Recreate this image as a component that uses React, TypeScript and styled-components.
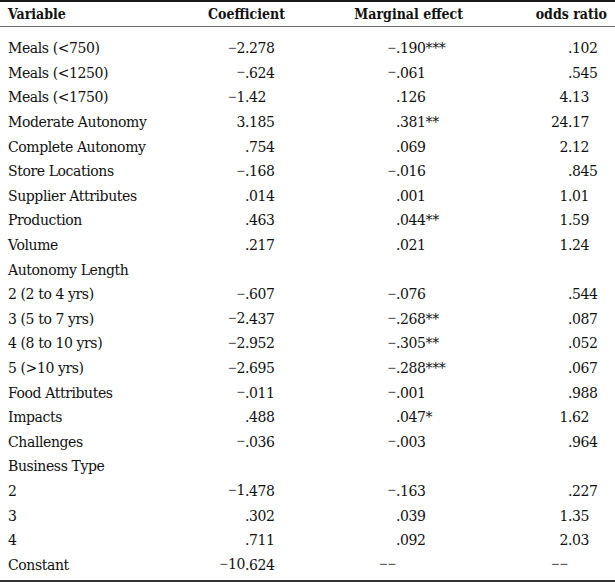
import React from "react";
import styled, { createGlobalStyle } from "styled-components";

const Global = createGlobalStyle`
  html, body { margin: 0; padding: 0; background: #ffffff; }
  body { font-family: "DejaVu Serif", "Liberation Serif", serif; color: #111111; }
`;

const COLS = "185px 60px 40px 111px 67px 105px 39px";

const Table = styled.div`
  width: 615px;
  box-sizing: border-box;
  border-top: 2px solid #1a1a1a;
  border-bottom: 2px solid #333333;
`;

const HeadRow = styled.div`
  display: grid;
  grid-template-columns: ${COLS};
  padding-right: 8px;
  height: 24px;
  align-items: center;
  border-bottom: 1px solid #6a6a6a;
  font-family: "DejaVu Serif Condensed", "DejaVu Serif", serif;
  font-weight: bold;
  font-size: 14px;
`;

const HeadCell = styled.div<{ $span?: number; $right?: boolean }>`
  grid-column: span ${(p) => p.$span ?? 1};
  text-align: ${(p) => (p.$right ? "right" : "left")};
  padding-left: ${(p) => (p.$right ? "0" : "8px")};
  white-space: nowrap;
`;

const Body = styled.div`
  padding: 9px 0 3px;
`;

const Row = styled.div`
  display: grid;
  grid-template-columns: ${COLS};
  padding-right: 8px;
  height: 24.6px;
  align-items: center;
  font-size: 14px;
  letter-spacing: -0.4px;
`;

const Label = styled.div`
  padding-left: 8px;
  white-space: nowrap;
`;

const IntPart = styled.span`
  text-align: right;
  white-space: nowrap;
`;

const FracPart = styled.span`
  text-align: left;
  white-space: nowrap;
`;

const Sign = styled.span`
  font-family: "Liberation Serif", serif;
  font-size: 15px;
  letter-spacing: 0;
`;

type RowData = [string, string?, string?, string?];

const rows: RowData[] = [
  ["Meals (<750)", "−2.278", "−.190***", ".102"],
  ["Meals (<1250)", "−.624", "−.061", ".545"],
  ["Meals (<1750)", "−1.42", ".126", "4.13"],
  ["Moderate Autonomy", "3.185", ".381**", "24.17"],
  ["Complete Autonomy", ".754", ".069", "2.12"],
  ["Store Locations", "−.168", "−.016", ".845"],
  ["Supplier Attributes", ".014", ".001", "1.01"],
  ["Production", ".463", ".044**", "1.59"],
  ["Volume", ".217", ".021", "1.24"],
  ["Autonomy Length"],
  ["2 (2 to 4 yrs)", "−.607", "−.076", ".544"],
  ["3 (5 to 7 yrs)", "−2.437", "−.268**", ".087"],
  ["4 (8 to 10 yrs)", "−2.952", "−.305**", ".052"],
  ["5 (>10 yrs)", "−2.695", "−.288***", ".067"],
  ["Food Attributes", "−.011", "−.001", ".988"],
  ["Impacts", ".488", ".047*", "1.62"],
  ["Challenges", "−.036", "−.003", ".964"],
  ["Business Type"],
  ["2", "−1.478", "−.163", ".227"],
  ["3", ".302", ".039", "1.35"],
  ["4", ".711", ".092", "2.03"],
  ["Constant", "−10.624", "−−", "−−"],
];

function withSigns(s: string) {
  return s.split(/(−)/).map((part, i) =>
    part === "−" ? <Sign key={i}>−</Sign> : <React.Fragment key={i}>{part}</React.Fragment>
  );
}

function Num({ value }: { value?: string }) {
  const v = value ?? "";
  const i = v.indexOf(".");
  const int = i < 0 ? v : v.slice(0, i);
  const frac = i < 0 ? "" : v.slice(i);
  return (
    <>
      <IntPart>{withSigns(int)}</IntPart>
      <FracPart>{frac}</FracPart>
    </>
  );
}

export default function App() {
  return (
    <>
      <Global />
      <Table>
        <HeadRow>
          <HeadCell>Variable</HeadCell>
          <HeadCell $span={2} $right>Coefficient</HeadCell>
          <HeadCell $span={2} $right>Marginal effect</HeadCell>
          <HeadCell $span={2} $right>odds ratio</HeadCell>
        </HeadRow>
        <Body>
          {rows.map((r, k) => (
            <Row key={k}>
              <Label>{r[0]}</Label>
              <Num value={r[1]} />
              <Num value={r[2]} />
              <Num value={r[3]} />
            </Row>
          ))}
        </Body>
      </Table>
    </>
  );
}
